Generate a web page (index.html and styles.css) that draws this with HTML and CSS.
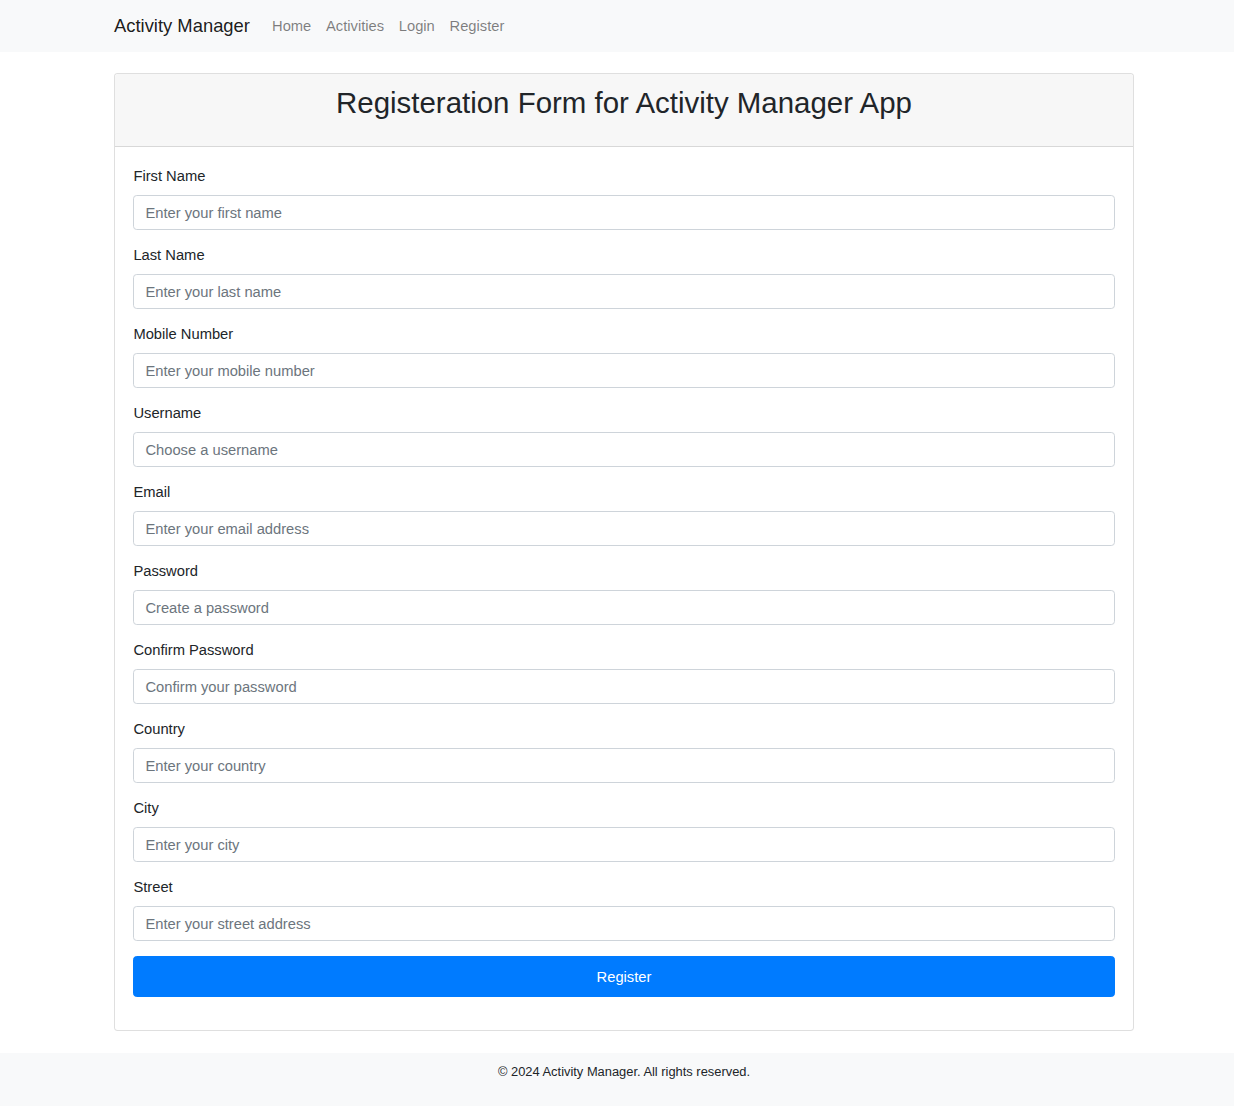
FILE: index.html
```html
<!DOCTYPE html>
<html lang="en">
<head>
<meta charset="utf-8">
<title>Register - Activity Manager</title>
<link rel="stylesheet" href="styles.css">
</head>
<body>
<nav class="navbar">
  <div class="container nav-inner">
    <a class="brand" href="#">Activity Manager</a>
    <ul class="nav-links">
      <li><a href="#">Home</a></li>
      <li><a href="#">Activities</a></li>
      <li><a href="#">Login</a></li>
      <li><a href="#">Register</a></li>
    </ul>
  </div>
</nav>

<main class="container main">
  <div class="card">
    <div class="card-header">
      <h2 class="card-title">Registeration Form for Activity Manager App</h2>
    </div>
    <div class="card-body">
      <form>
        <div class="form-group">
          <label for="firstName">First Name</label>
          <input id="firstName" class="form-control" type="text" placeholder="Enter your first name">
        </div>
        <div class="form-group">
          <label for="lastName">Last Name</label>
          <input id="lastName" class="form-control" type="text" placeholder="Enter your last name">
        </div>
        <div class="form-group">
          <label for="mobile">Mobile Number</label>
          <input id="mobile" class="form-control" type="text" placeholder="Enter your mobile number">
        </div>
        <div class="form-group">
          <label for="username">Username</label>
          <input id="username" class="form-control" type="text" placeholder="Choose a username">
        </div>
        <div class="form-group">
          <label for="email">Email</label>
          <input id="email" class="form-control" type="email" placeholder="Enter your email address">
        </div>
        <div class="form-group">
          <label for="password">Password</label>
          <input id="password" class="form-control" type="password" placeholder="Create a password">
        </div>
        <div class="form-group">
          <label for="confirm">Confirm Password</label>
          <input id="confirm" class="form-control" type="password" placeholder="Confirm your password">
        </div>
        <div class="form-group">
          <label for="country">Country</label>
          <input id="country" class="form-control" type="text" placeholder="Enter your country">
        </div>
        <div class="form-group">
          <label for="city">City</label>
          <input id="city" class="form-control" type="text" placeholder="Enter your city">
        </div>
        <div class="form-group">
          <label for="street">Street</label>
          <input id="street" class="form-control" type="text" placeholder="Enter your street address">
        </div>
        <button type="submit" class="btn-primary">Register</button>
      </form>
    </div>
  </div>
</main>

<footer class="footer">
  <p>&copy; 2024 Activity Manager. All rights reserved.</p>
</footer>
</body>
</html>
```

FILE: styles.css
```css
* { box-sizing: border-box; }

html, body {
  margin: 0;
  padding: 0;
}

body {
  font-family: "Liberation Sans", Arial, sans-serif;
  font-size: 14.72px;
  line-height: 1.5;
  color: #212529;
  background: #fff;
}

a { text-decoration: none; }

.container {
  width: 1020px;
  margin-left: 114px;
}

/* Navbar */
.navbar {
  background: #f8f9fa;
  height: 52px;
  display: flex;
  align-items: center;
}

.nav-inner {
  display: flex;
  align-items: center;
}

.brand {
  font-size: 18.4px;
  line-height: 27.6px;
  margin-right: 14.72px;
  color: rgba(0, 0, 0, 0.9);
  white-space: nowrap;
}

.nav-links {
  display: flex;
  list-style: none;
  margin: 0;
  padding: 0;
}

.nav-links a {
  display: block;
  padding: 7px 7.36px;
  color: rgba(0, 0, 0, 0.5);
}

/* Main */
.main {
  margin-top: 21px;
}

.card {
  border: 1px solid rgba(0, 0, 0, 0.125);
  border-radius: 3.7px;
  background: #fff;
}

.card-header {
  background: #f7f7f7;
  border-bottom: 1px solid rgba(0, 0, 0, 0.125);
  border-radius: 3.7px 3.7px 0 0;
  padding: 11px 18.4px;
  text-align: center;
}

.card-title {
  margin: 0 0 14.72px;
  font-size: 29.44px;
  font-weight: 400;
  line-height: 1.2;
}

.card-body {
  padding: 18px 18.4px 33px;
}

form { margin: 0; }

.form-group {
  margin-bottom: 14px;
}

label {
  display: block;
  line-height: 22px;
  margin-bottom: 8px;
}

.form-control {
  display: block;
  width: 100%;
  height: 35px;
  padding: 5.5px 11px;
  font-family: inherit;
  font-size: 14.72px;
  line-height: 1.5;
  color: #495057;
  background: #fff;
  border: 1px solid #ced4da;
  border-radius: 3.7px;
}

.form-control::placeholder {
  color: #6c757d;
  opacity: 1;
}

.btn-primary {
  display: block;
  width: 100%;
  height: 41px;
  margin-top: 15px;
  font-family: inherit;
  font-size: 14.72px;
  color: #fff;
  background: #007bff;
  border: 1px solid #007bff;
  border-radius: 3.7px;
  cursor: pointer;
}

/* Footer */
.footer {
  margin-top: 22px;
  background: #f8f9fa;
  min-height: 53px;
  padding: 9px 0 0 14px;
  text-align: center;
}

.footer p {
  margin: 0;
  font-size: 12.88px;
  line-height: 19px;
}
```
